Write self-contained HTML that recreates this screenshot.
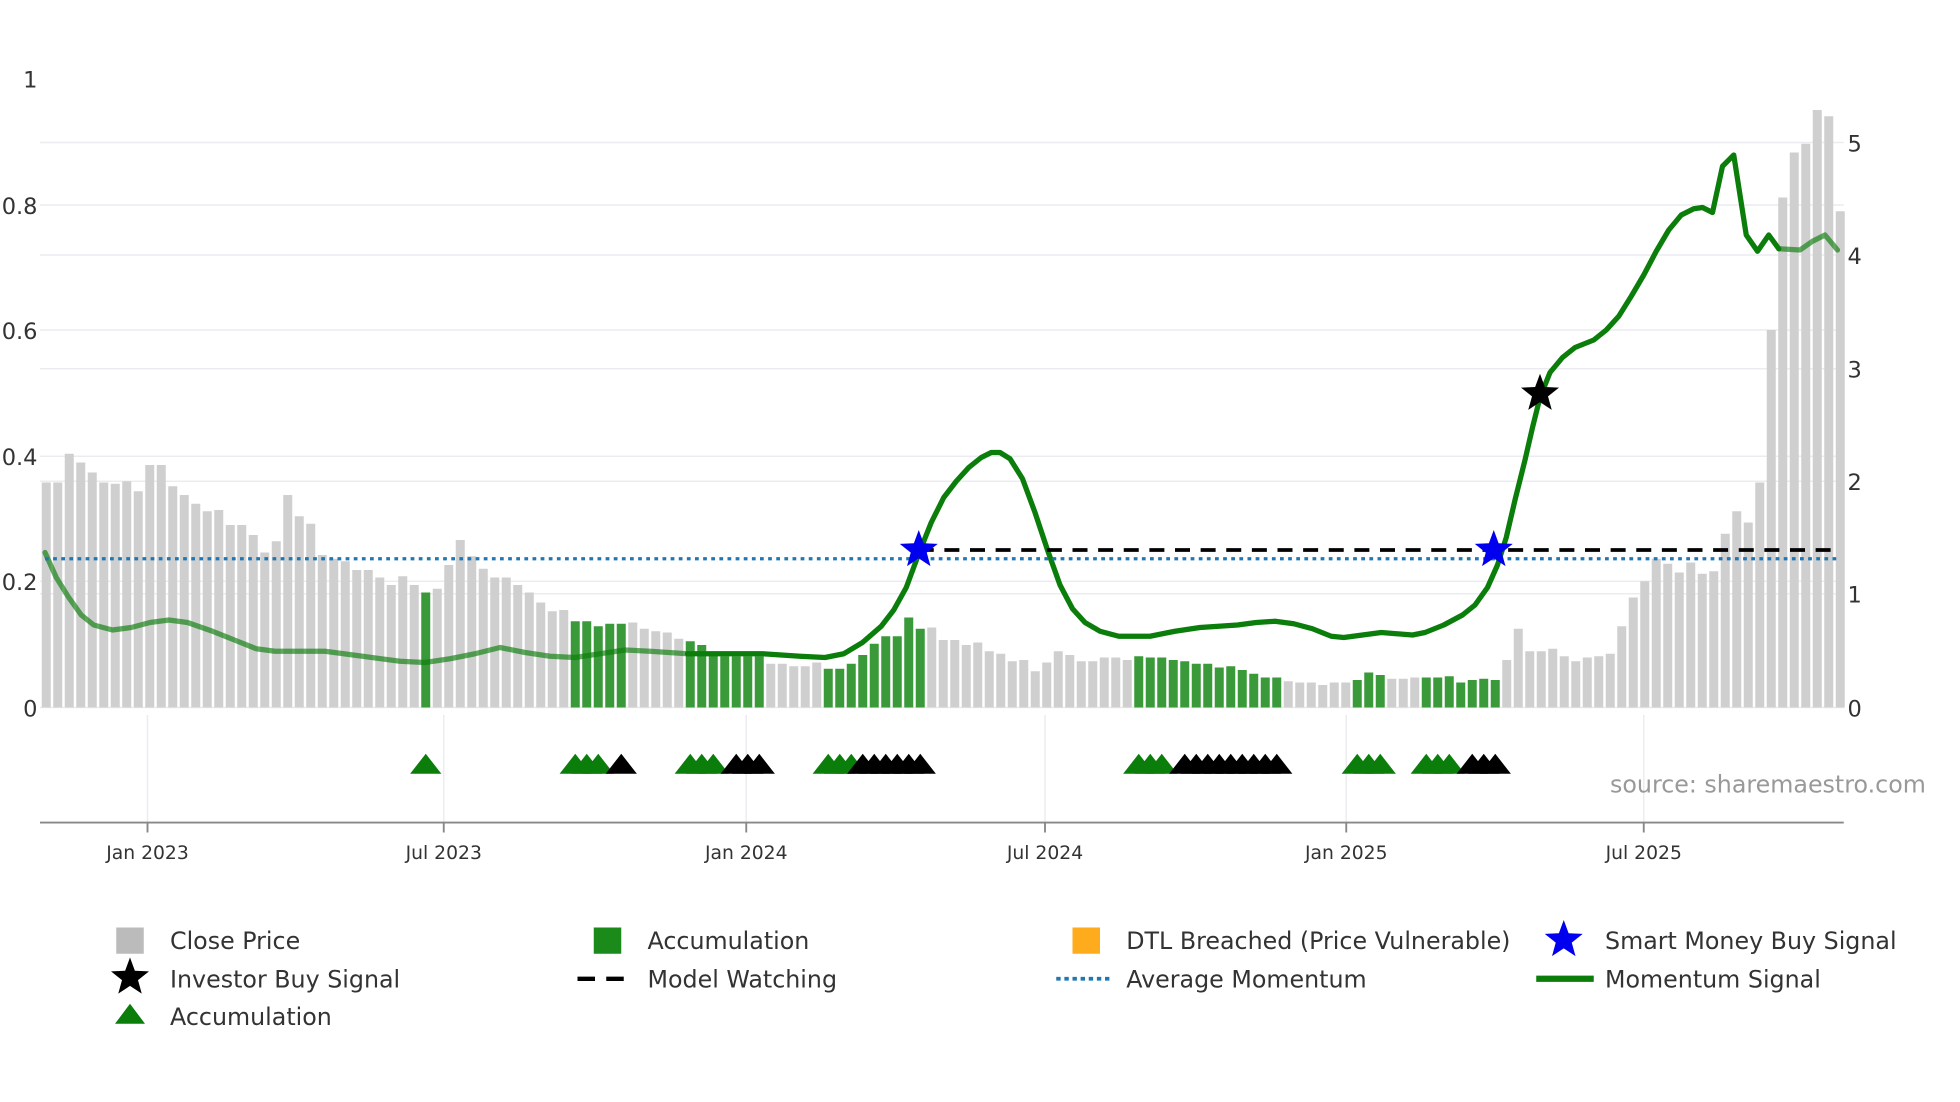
<!DOCTYPE html>
<html><head><meta charset="utf-8">
<style>
html,body{margin:0;padding:0;background:#fff;}
svg{display:block;}
text{font-family:"DejaVu Sans","Liberation Sans",sans-serif;}
</style></head>
<body>
<svg id="c" width="1960" height="1102" viewBox="0 0 1568 881.6" xmlns="http://www.w3.org/2000/svg">
<rect width="1568" height="881.6" fill="#fff"/>
<g stroke="#ececf0" stroke-width="1.2">
<line x1="32" x2="1475" y1="114" y2="114"/>
<line x1="32" x2="1475" y1="164" y2="164"/>
<line x1="32" x2="1475" y1="204" y2="204"/>
<line x1="32" x2="1475" y1="264" y2="264"/>
<line x1="32" x2="1475" y1="295" y2="295"/>
<line x1="32" x2="1475" y1="365" y2="365"/>
<line x1="32" x2="1475" y1="385" y2="385"/>
<line x1="32" x2="1475" y1="465" y2="465"/>
<line x1="32" x2="1475" y1="475" y2="475"/>
<line x1="32" x2="1475" y1="566" y2="566"/>
<line x1="118" x2="118" y1="572" y2="658"/>
<line x1="355" x2="355" y1="572" y2="658"/>
<line x1="597" x2="597" y1="572" y2="658"/>
<line x1="836" x2="836" y1="572" y2="658"/>
<line x1="1077" x2="1077" y1="572" y2="658"/>
<line x1="1315" x2="1315" y1="572" y2="658"/>
</g>
<g id="bars"></g>
<g id="line"></g>
<line x1="36" x2="1470" y1="447" y2="447" stroke="#1f77b4" stroke-width="2.6" stroke-dasharray="3,3.5"/>
<line x1="735" x2="1470" y1="440" y2="440" stroke="#000" stroke-width="3" stroke-dasharray="12,8.5"/>
<g id="stars"></g>
<g id="tri"></g>
<line x1="32" x2="1475" y1="658" y2="658" stroke="#888" stroke-width="1.5"/>
<g stroke="#888" stroke-width="1.5">
<line x1="118" x2="118" y1="658" y2="666"/><line x1="355" x2="355" y1="658" y2="666"/>
<line x1="597" x2="597" y1="658" y2="666"/><line x1="836" x2="836" y1="658" y2="666"/>
<line x1="1077" x2="1077" y1="658" y2="666"/><line x1="1315" x2="1315" y1="658" y2="666"/>
</g>
<g font-size="15" fill="#333" text-anchor="middle">
<text x="118" y="687">Jan 2023</text><text x="355" y="687">Jul 2023</text>
<text x="597" y="687">Jan 2024</text><text x="836" y="687">Jul 2024</text>
<text x="1077" y="687">Jan 2025</text><text x="1315" y="687">Jul 2025</text>
</g>
<g font-size="18" fill="#333" text-anchor="end">
<text x="30" y="70">1</text><text x="30" y="171">0.8</text><text x="30" y="271">0.6</text>
<text x="30" y="372">0.4</text><text x="30" y="472">0.2</text><text x="30" y="573">0</text>
</g>
<g font-size="18" fill="#333">
<text x="1478" y="121">5</text><text x="1478" y="211">4</text><text x="1478" y="302">3</text>
<text x="1478" y="392">2</text><text x="1478" y="482">1</text><text x="1478" y="573">0</text>
</g>
<text x="1288" y="634" font-size="19" fill="#999">source: sharemaestro.com</text>
<g font-size="19" fill="#333">
<rect x="93" y="742" width="22" height="21" fill="#bbb"/>
<text x="136" y="759">Close Price</text>
<rect x="475" y="742" width="22" height="21" fill="#1a8a1a"/>
<text x="518" y="759">Accumulation</text>
<rect x="858" y="742" width="22" height="21" fill="#ffab1e"/>
<text x="901" y="759">DTL Breached (Price Vulnerable)</text>
<text x="1284" y="759">Smart Money Buy Signal</text>
<text x="136" y="790">Investor Buy Signal</text>
<line x1="462" x2="506" y1="783" y2="783" stroke="#000" stroke-width="3.5" stroke-dasharray="14,9"/>
<text x="518" y="790">Model Watching</text>
<line x1="845" x2="889" y1="783" y2="783" stroke="#1f77b4" stroke-width="3" stroke-dasharray="3.5,3"/>
<text x="901" y="790">Average Momentum</text>
<line x1="1229" x2="1275" y1="783" y2="783" stroke="#0a7d0a" stroke-width="5"/>
<text x="1284" y="790">Momentum Signal</text>
<polygon points="104,803 116,819 92,819" fill="#0a7d0a"/>
<text x="136" y="820">Accumulation</text>
</g>
<g id="legstars"></g>
</svg>
<script>
var NS="http://www.w3.org/2000/svg";
function el(t,a,p){var e=document.createElementNS(NS,t);for(var k in a)e.setAttribute(k,a[k]);p.appendChild(e);return e;}
var tops=[386,386,363,370,378,386,387,385,393,372,372,389,396,403,409,408,420,420,428,442,433,396,413,419,444,447,449,456,456,462,468,461,468,474,471,452,432,445,455,462,462,468,474,482,489,488,497,497,501,499,499,498,503,505,506,511,513,516,523,525,525,525,525,531,531,533,533,530,535,535,531,524,515,509,509,494,503,502,512,512,516,514,521,523,529,528,537,530,521,524,529,529,526,526,528,525,526,526,528,529,531,531,534,533,536,539,542,542,545,546,546,548,546,546,544,538,540,543,543,542,542,542,541,546,544,543,544,528,503,521,521,519,525,529,526,525,523,501,478,465,447,451,458,450,459,457,427,409,418,386,264,158,122,115,88,93,169];
var green={};
[33,46,47,48,49,50,56,57,58,59,60,61,62,68,69,70,71,72,73,74,75,76,95,96,97,98,99,100,101,102,103,104,105,106,107,114,115,116,120,121,122,123,124,125,126].forEach(function(i){green[i]=1;});
var bg=document.getElementById("bars");
for(var i=0;i<tops.length;i++){var x=37+9.2*i;el("rect",{x:x-3.6,y:tops[i],width:7.2,height:566-tops[i],fill:green[i]?"#3a9a3a":"#cfcfcf"},bg);}
var pts=[[36,442],[45,462],[55,478],[65,492],[75,500],[90,504],[105,502],[120,498],[135,496],[150,498],[170,505],[190,513],[205,519],[220,521],[260,521],[290,525],[320,529],[340,530],[360,527],[380,523],[400,518],[420,522],[440,525],[460,526],[480,523],[500,520],[520,521],[550,523],[570,523],[610,523],[640,525],[660,526],[675,523],[690,514],[705,501],[715,488],[725,470],[735,443],[745,418],[755,398],[765,385],[775,374],[785,366],[793,362],[800,362],[808,367],[818,383],[828,410],[838,440],[848,468],[858,487],[868,498],[880,505],[895,509],[920,509],[940,505],[960,502],[990,500],[1005,498],[1020,497],[1035,499],[1050,503],[1065,509],[1075,510],[1090,508],[1105,506],[1130,508],[1140,506],[1155,500],[1170,492],[1180,484],[1190,470],[1198,452],[1205,430],[1212,400],[1220,368],[1226,342],[1232,318],[1240,298],[1250,286],[1260,278],[1275,272],[1285,264],[1295,253],[1305,237],[1315,220],[1325,201],[1335,184],[1345,172],[1355,167],[1362,166],[1370,170],[1378,133],[1387,124],[1397,188],[1406,201],[1415,188],[1423,199],[1440,200],[1450,193],[1460,188],[1470,200]];
var lg=document.getElementById("line");
function seg(a,b,op){var s=pts.slice(a,b+1).map(function(p){return p.join(",");}).join(" ");el("polyline",{points:s,fill:"none",stroke:"#0a7d0a","stroke-width":4.2,"stroke-linejoin":"round","stroke-linecap":"round",opacity:op},lg);}
var iA=27,iB=pts.length-5;
seg(0,iA,0.65);seg(iA,iB,1);seg(iB,pts.length-1,0.65);
function star(cx,cy,R,fill,p){var r=R*0.42,s=[];for(var k=0;k<10;k++){var a=-Math.PI/2+k*Math.PI/5,rr=k%2?r:R;s.push((cx+rr*Math.cos(a)).toFixed(1)+","+(cy+rr*Math.sin(a)).toFixed(1));}el("polygon",{points:s.join(" "),fill:fill},p);}
var sg=document.getElementById("stars");
star(735,440,16,"#0000ee",sg);star(1195,440,16,"#0000ee",sg);star(1232,315,16,"#000",sg);
var lsg=document.getElementById("legstars");
star(1251,752,16,"#0000ee",lsg);star(104,782,16,"#000",lsg);
var tg=document.getElementById("tri");
var G=[33,46,47,48,56,57,58,68,69,70,95,96,97,114,115,116,120,121,122];
var B=[50,60,61,62,71,72,73,74,75,76,99,100,101,102,103,104,105,106,107,124,125,126];
function tri(i,c){var x=37+9.2*i;el("polygon",{points:(x)+",603 "+(x+12.5)+",619 "+(x-12.5)+",619",fill:c},tg);}
G.forEach(function(i){tri(i,"#0a7d0a");});B.forEach(function(i){tri(i,"#000");});
</script>
</body></html>
